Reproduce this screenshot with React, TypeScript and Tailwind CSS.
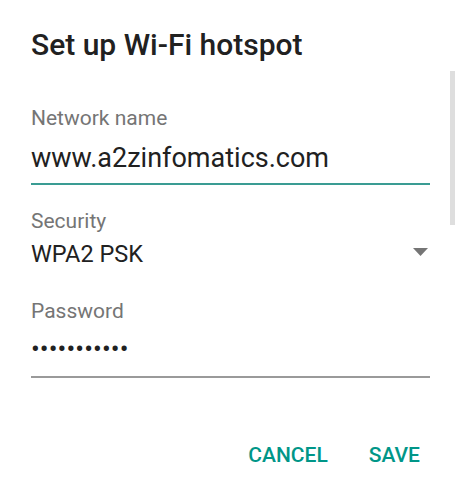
import React from "react";

export default function App() {
  const font = { fontFamily: "Roboto, 'Noto Sans', sans-serif" };
  return (
    <div className="w-[458px] h-[492px] bg-white relative overflow-hidden" style={font}>
      <div className="flex flex-col h-full">
        <div className="pl-[31px] pt-[25px] text-[30px] leading-[40px] font-medium text-[#212121]">
          Set up Wi-Fi hotspot
        </div>
        <div className="relative flex-1 overflow-hidden">
          <div className="flex flex-col pl-[31px] pr-[28px] pt-[39px]">
            <div className="text-[21px] leading-[28px] text-[#757575]">Network name</div>
            <div className="mt-[8px] pb-[7px] border-b-2 border-[#3a9c93] text-[27px] leading-[36px] text-[#212121]">
              www.a2zinfomatics.com
            </div>
            <div className="mt-[22px] text-[21px] leading-[28px] text-[#757575]">Security</div>
            <div className="mt-[3px] flex justify-between text-[23.5px] leading-[32px] text-[#212121]">
              <span>WPA2 PSK</span>
              <svg width="15" height="8" viewBox="0 0 15 8" className="mr-[2px] mt-[10px]">
                <path d="M0 0 L15 0 L7.5 8 Z" fill="#757575" />
              </svg>
            </div>
            <div className="mt-[27px] text-[21px] leading-[28px] text-[#757575]">Password</div>
            <div className="mt-[9px] pb-[12px] border-b-2 border-[#9a9a9a] text-[26px] leading-[30px] tracking-[0.1px] text-[#212121]">
              •••••••••••
            </div>
          </div>
          <div className="absolute right-[3px] top-[6px] w-[5px] h-[154px] bg-[#dedede]" />
        </div>
        <div className="flex justify-end gap-[41px] pr-[38px] pb-[23px] pt-[40px] text-[21px] leading-[28px] font-medium text-[#009688]">
          <span>CANCEL</span>
          <span>SAVE</span>
        </div>
      </div>
    </div>
  );
}
